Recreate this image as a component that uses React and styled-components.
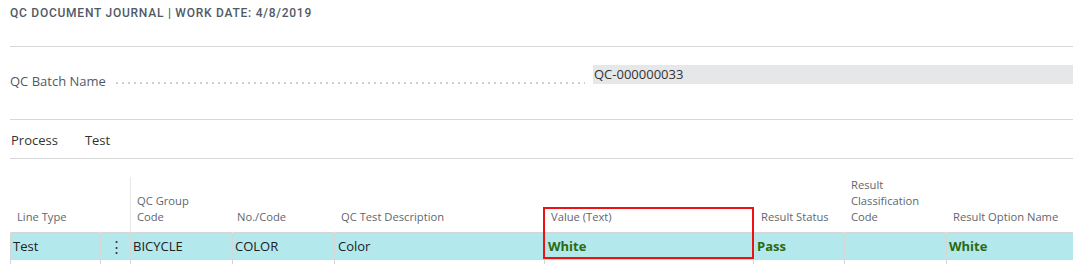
import React from 'react';
import styled, { createGlobalStyle } from 'styled-components';

const GlobalStyle = createGlobalStyle`
  body {
    margin: 0;
    font-family: 'Segoe UI', 'Open Sans', 'Noto Sans', sans-serif;
    background-color: #ffffff;
    color: #212121;
  }
`;

const Page = styled.div`
  width: 1073px;
  height: 264px;
  overflow: hidden;
  padding-left: 10px;
  box-sizing: border-box;
`;

const Title = styled.div`
  height: 47px;
  box-sizing: border-box;
  padding-top: 6px;
  font-family: Roboto, 'Liberation Sans', sans-serif;
  font-weight: 500;
  font-size: 12px;
  letter-spacing: 0.75px;
  color: #505a66;
  border-bottom: 1px solid #d8d8d8;
`;

const FieldSection = styled.div`
  height: 73px;
  box-sizing: border-box;
  border-bottom: 1px solid #d8d8d8;
  display: flex;
  align-items: flex-start;
  padding-top: 18px;
`;

const FieldLabel = styled.div`
  width: 583px;
  display: flex;
  align-items: center;
  font-size: 13px;
  color: #505a66;
  margin-top: 7px;
  white-space: nowrap;
`;

const Leader = styled.span`
  flex: 1;
  margin: 3px 8px 0 8px;
  height: 2px;
  background-image: radial-gradient(circle, #cfcfcf 0.8px, transparent 1px);
  background-size: 6px 2px;
  background-repeat: repeat-x;
`;

const FieldValue = styled.div`
  flex: 1;
  height: 19px;
  background: #e6e7e8;
  font-size: 13px;
  line-height: 19px;
  color: #333333;
  padding-left: 1px;
`;

const ActionBar = styled.div`
  height: 39px;
  box-sizing: border-box;
  border-bottom: 1px solid #d8d8d8;
  display: flex;
  align-items: center;
  gap: 27px;
  padding-left: 1px;
  padding-top: 2px;
  font-size: 13px;
  color: #333333;
`;

const TableWrap = styled.div`
  position: relative;
  margin-top: 18px;
`;

const Grid = styled.div`
  display: grid;
  grid-template-columns: 90px 30px 102px 102px 210px 209px 91px 102px 1fr;
`;

const HeadCell = styled.div`
  height: 56px;
  box-sizing: border-box;
  display: flex;
  align-items: flex-end;
  padding: 0 4px 7px ${(p) => p.$pad || 6}px;
  font-size: 11.2px;
  line-height: 16px;
  color: #5f6670;
  border-left: ${(p) => (p.$divider ? '1px solid #e8e8e8' : '1px solid transparent')};
  border-bottom: 1px solid #d6d6d6;
`;

const Cell = styled.div`
  height: 27px;
  box-sizing: border-box;
  background: ${(p) => (p.$empty ? '#ffffff' : '#b3e9ec')};
  border-left: 1px solid #d6d6d6;
  border-bottom: ${(p) => (p.$empty ? 'none' : '1px solid #d6d6d6')};
  padding-left: ${(p) => p.$pad || 2}px;
  font-size: 13px;
  line-height: 26px;
  white-space: nowrap;
  color: ${(p) => (p.$good ? '#2b6a12' : '#212121')};
  font-weight: ${(p) => (p.$good ? 700 : 400)};
`;

const Dots = styled.span`
  display: block;
  text-align: center;
  font-size: 15px;
  color: #333;
`;

const Highlight = styled.div`
  position: absolute;
  left: 533px;
  top: 30px;
  width: 211px;
  height: 52px;
  box-sizing: border-box;
  border: 2px solid #ee1111;
  pointer-events: none;
`;

const headers = [
  { label: 'Line Type' },
  { label: '' },
  { label: 'QC Group Code', divider: true, w: 64 },
  { label: 'No./Code', pad: 4 },
  { label: 'QC Test Description' },
  { label: 'Value (Text)' },
  { label: 'Result Status', pad: 7 },
  { label: 'Result Classification Code', w: 75 },
  { label: 'Result Option Name' },
];

const row = [
  { text: 'Test' },
  { text: <Dots>⋮</Dots>, pad: 0 },
  { text: 'BICYCLE' },
  { text: 'COLOR' },
  { text: 'Color', pad: 3 },
  { text: 'White', good: true, pad: 3 },
  { text: 'Pass', good: true, pad: 3 },
  { text: '' },
  { text: 'White', good: true },
];

const App = () => {
  return (
    <>
      <GlobalStyle />
      <Page>
        <Title>QC DOCUMENT JOURNAL | WORK DATE: 4/8/2019</Title>
        <FieldSection>
          <FieldLabel>
            QC Batch Name
            <Leader />
          </FieldLabel>
          <FieldValue>QC-000000033</FieldValue>
        </FieldSection>
        <ActionBar>
          <span>Process</span>
          <span>Test</span>
        </ActionBar>
        <TableWrap>
          <Grid>
            {headers.map((h, i) => (
              <HeadCell key={'h' + i} $divider={h.divider} $pad={h.pad}>
                <span style={h.w ? { maxWidth: h.w } : undefined}>{h.label}</span>
              </HeadCell>
            ))}
            {row.map((c, i) => (
              <Cell key={'r' + i} $good={c.good} $pad={c.pad}>
                {c.text}
              </Cell>
            ))}
            {row.map((c, i) => (
              <Cell key={'e' + i} $empty />
            ))}
          </Grid>
          <Highlight />
        </TableWrap>
      </Page>
    </>
  );
};

export default App;
